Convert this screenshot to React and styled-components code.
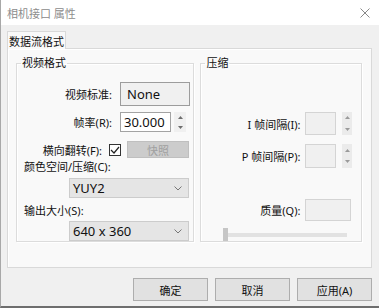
import React from 'react';
import styled, { createGlobalStyle } from 'styled-components';

const GlobalStyle = createGlobalStyle`
  html, body {
    margin: 0;
    padding: 0;
    background: #f0f0f0;
  }
  * {
    box-sizing: border-box;
  }
`;

const Window = styled.div`
  width: 379px;
  height: 308px;
  display: flex;
  flex-direction: column;
  background: #f0f0f0;
  border-left: 1px solid #a8a8a8;
  border-bottom: 2px solid #6e6e6e;
  font-family: "Noto Sans", "Noto Sans CJK SC", sans-serif;
  font-size: 11px;
  color: #111;
  overflow: hidden;
`;

const TitleBar = styled.div`
  height: 25px;
  flex: none;
  display: flex;
  align-items: center;
  justify-content: space-between;
  padding: 0 9px 0 6px;
  background: #fff;
`;

const Title = styled.span`
  color: #8c8c8c;
  font-size: 11px;
`;

const Body = styled.div`
  flex: 1;
  display: flex;
  flex-direction: column;
  padding: 6px 7px 0 6px;
`;

const TabStrip = styled.div`
  display: flex;
  height: 18px;
  margin-bottom: -1px;
  position: relative;
  z-index: 1;
`;

const Tab = styled.div`
  width: 59px;
  height: 18px;
  display: flex;
  align-items: center;
  justify-content: center;
  white-space: nowrap;
  background: #f9f9f9;
  border: 1px solid #d9d9d9;
  border-bottom: none;
`;

const TabPage = styled.div`
  height: 220px;
  display: flex;
  gap: 6px;
  padding: 7px 9px 0 8px;
  background: #f9f9f9;
  border: 1px solid #d9d9d9;
  box-shadow: inset 1px 1px 0 #fff;
`;

const Group = styled.fieldset`
  margin: 0;
  padding: 0;
  width: ${(p) => p.$width}px;
  height: 186px;
  display: flex;
  flex-direction: column;
  border: 1px solid #dcdcdc;
  box-shadow: 1px 1px 0 #fff, inset 1px 1px 0 #fff;
  min-width: 0;
`;

const Legend = styled.legend`
  margin-left: 4px;
  padding: 0 1px;
  line-height: 14px;
`;

const Row = styled.div`
  display: flex;
  align-items: center;
  height: ${(p) => p.$h}px;
  margin-top: ${(p) => p.$mt}px;
`;

const Label = styled.span`
  flex: none;
  width: ${(p) => p.$w}px;
  text-align: right;
  margin-right: ${(p) => p.$gap}px;
  white-space: nowrap;
`;

const StaticBox = styled.div`
  width: 70px;
  height: 24px;
  padding: 0 6px;
  display: flex;
  align-items: center;
  border: 1px solid #9c9c9c;
  background: #f0f0f0;
  font-size: 13px;
`;

const Edit = styled.div`
  width: ${(p) => p.$w}px;
  height: 100%;
  display: flex;
  align-items: center;
  padding: 0 3px;
  font-size: 13px;
  background: ${(p) => (p.$disabled ? '#f0f0f0' : '#fff')};
  border: 1px solid ${(p) => (p.$disabled ? '#d4d4d4' : '#a3a3a3')};
`;

const Spin = styled.div`
  width: ${(p) => p.$w}px;
  height: 100%;
  margin-left: ${(p) => p.$gap}px;
  display: flex;
  flex-direction: column;
  background: ${(p) => (p.$disabled ? '#ebebeb' : '#f0f0f0')};
`;

const SpinHalf = styled.div`
  flex: 1;
  display: flex;
  align-items: center;
  justify-content: center;
`;

const CheckBox = styled.div`
  flex: none;
  width: 12px;
  height: 12px;
  border: 1px solid #333;
  background: #fff;
  display: flex;
  align-items: center;
  justify-content: center;
  margin-right: 6px;
`;

const SmallButton = styled.div`
  width: 62px;
  height: 17px;
  display: flex;
  align-items: center;
  justify-content: center;
  background: #cccccc;
  border: 1px solid #bfbfbf;
  color: #a0a0a0;
`;

const Caption = styled.div`
  margin-top: ${(p) => p.$mt}px;
  padding-left: 7px;
  line-height: 16px;
`;

const Combo = styled.div`
  margin-top: ${(p) => p.$mt}px;
  margin-left: 52px;
  width: 120px;
  height: 20px;
  display: flex;
  align-items: center;
  justify-content: space-between;
  padding: 0 6px 0 3px;
  background: #e5e5e5;
  border: 1px solid #cccccc;
  font-size: 13px;
`;

const Slider = styled.div`
  margin-top: 7px;
  margin-left: 22px;
  width: 124px;
  height: 13px;
  display: flex;
  align-items: center;
`;

const Thumb = styled.div`
  width: 5px;
  height: 13px;
  background: #c6c6c6;
  flex: none;
`;

const Track = styled.div`
  flex: 1;
  height: 4px;
  background: #e2e2e2;
`;

const ButtonRow = styled.div`
  display: flex;
  justify-content: flex-end;
  gap: 7px;
  margin-top: 10px;
`;

const DialogButton = styled.div`
  width: 75px;
  height: 23px;
  display: flex;
  align-items: center;
  justify-content: center;
  background: #e1e1e1;
  border: 1px solid #adadad;
`;

function Arrow({ up, color = '#6d6d6d' }) {
  return (
    <svg width="5" height="3" viewBox="0 0 5 3">
      <path d={up ? 'M0 3 L2.5 0 L5 3 Z' : 'M0 0 L5 0 L2.5 3 Z'} fill={color} />
    </svg>
  );
}

function SpinButtons({ w, gap, disabled }) {
  const color = disabled ? '#9a9a9a' : '#6d6d6d';
  return (
    <Spin $w={w} $gap={gap} $disabled={disabled}>
      <SpinHalf><Arrow up color={color} /></SpinHalf>
      <SpinHalf><Arrow color={color} /></SpinHalf>
    </Spin>
  );
}

function Chevron() {
  return (
    <svg width="8" height="5" viewBox="0 0 8 5">
      <path d="M0.5 0.5 L4 4 L7.5 0.5" fill="none" stroke="#777" strokeWidth="1" />
    </svg>
  );
}

function CloseIcon() {
  return (
    <svg width="10" height="10" viewBox="0 0 10 10">
      <path d="M0.5 0.5 L9.5 9.5 M9.5 0.5 L0.5 9.5" stroke="#888" strokeWidth="1" />
    </svg>
  );
}

function App() {
  return (
    <>
      <GlobalStyle />
      <Window>
        <TitleBar>
          <Title>相机接口 属性</Title>
          <CloseIcon />
        </TitleBar>
        <Body>
          <TabStrip>
            <Tab>数据流格式</Tab>
          </TabStrip>
          <TabPage>
            <Group $width={180}>
              <Legend>视频格式</Legend>
              <Row $h={24} $mt={12}>
                <Label $w={95} $gap={8}>视频标准:</Label>
                <StaticBox>None</StaticBox>
              </Row>
              <Row $h={24} $mt={6}>
                <Label $w={95} $gap={8}>帧率(R):</Label>
                <Edit $w={51}>30.000</Edit>
                <SpinButtons w={12} gap={3} />
              </Row>
              <Row $h={17} $mt={9}>
                <Label $w={85} $gap={7}>横向翻转(F):</Label>
                <CheckBox>
                  <svg width="10" height="8" viewBox="0 0 10 8">
                    <path d="M1 4 L4 7 L9 1" fill="none" stroke="#222" strokeWidth="1.2" />
                  </svg>
                </CheckBox>
                <SmallButton>快照</SmallButton>
              </Row>
              <Caption $mt={1}>颜色空间/压缩(C):</Caption>
              <Combo $mt={3}>
                <span>YUY2</span>
                <Chevron />
              </Combo>
              <Caption $mt={5}>输出大小(S):</Caption>
              <Combo $mt={2}>
                <span>640 x 360</span>
                <Chevron />
              </Combo>
            </Group>
            <Group $width={163}>
              <Legend>压缩</Legend>
              <Row $h={24} $mt={42}>
                <Label $w={99} $gap={5}>I 帧间隔(I):</Label>
                <Edit $w={31} $disabled />
                <SpinButtons w={10} gap={6} disabled />
              </Row>
              <Row $h={24} $mt={9}>
                <Label $w={99} $gap={5}>P 帧间隔(P):</Label>
                <Edit $w={31} $disabled />
                <SpinButtons w={10} gap={6} disabled />
              </Row>
              <Row $h={23} $mt={31}>
                <Label $w={99} $gap={5}>质量(Q):</Label>
                <Edit $w={46} $disabled />
              </Row>
              <Slider>
                <Thumb />
                <Track />
              </Slider>
            </Group>
          </TabPage>
          <ButtonRow>
            <DialogButton>确定</DialogButton>
            <DialogButton>取消</DialogButton>
            <DialogButton>应用(A)</DialogButton>
          </ButtonRow>
        </Body>
      </Window>
    </>
  );
}

export default App;
